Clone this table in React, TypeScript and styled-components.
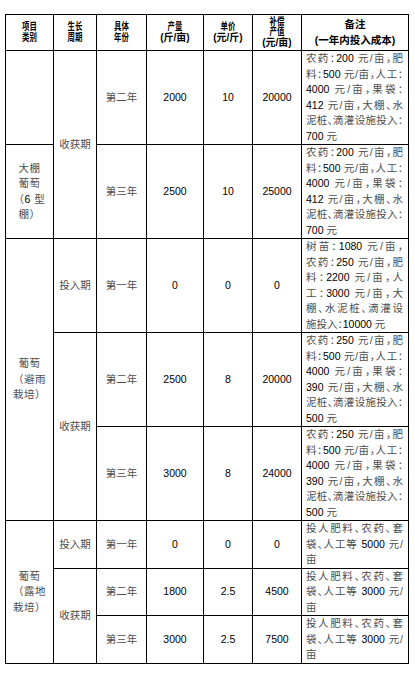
import React from "react";
import styled, { createGlobalStyle } from "styled-components";

const GlobalStyle = createGlobalStyle`
  html, body { margin: 0; padding: 0; background: #fff; }
  body { font-family: "Liberation Sans", "Noto Sans CJK SC", sans-serif; }
`;

const Page = styled.div`
  width: 415px;
  height: 674px;
  box-sizing: border-box;
  padding: 14px 0 0 5px;
  background: #fff;
`;

const Table = styled.table`
  border-collapse: collapse;
  table-layout: fixed;
  width: 404px;
  font-family: "Liberation Sans", "Noto Sans CJK SC", sans-serif;
`;

const HeadCell = styled.th<{ $tall?: boolean }>`
  border: 1px solid #000;
  padding: 0;
  height: 35px;
  font-size: ${(p) => (p.$tall ? "10.5px" : "10px")};
  font-weight: 700;
  line-height: ${(p) => (p.$tall ? "15.5px" : "10.5px")};
  color: #000;
  text-align: center;
  vertical-align: middle;
`;

const HeadLine = styled.span<{ $narrow?: boolean }>`
  display: block;
  white-space: nowrap;
  transform: ${(p) => (p.$narrow ? "scaleX(0.74)" : "none")};
`;

const Cell = styled.td`
  border: 1px solid #000;
  padding: 0;
  font-size: 10.5px;
  line-height: 15.5px;
  color: #4d4d4d;
  text-align: center;
  vertical-align: middle;
  white-space: nowrap;
`;

const KindLine = styled.span`
  display: block;
  letter-spacing: 0.5px;
`;

const NoteCell = styled.td`
  border: 1px solid #000;
  padding: 0 5px 0 4px;
  font-size: 10.5px;
  line-height: 15.5px;
  color: #4d4d4d;
  vertical-align: top;
  font-feature-settings: "halt";
`;

const NoteLine = styled.span<{ $last?: boolean }>`
  display: block;
  text-align: ${(p) => (p.$last ? "left" : "justify")};
  text-align-last: ${(p) => (p.$last ? "left" : "justify")};
`;

const Num = styled.span`
  color: #000;
`;

const withNums = (s: string) =>
  s.split(/(\d+(?:\.\d+)?)/).map((part, i) =>
    /^\d/.test(part) ? <Num key={i}>{part}</Num> : <React.Fragment key={i}>{part}</React.Fragment>
  );

type Span = { lines: string[]; span: number } | null;
type Row = {
  kind: Span;
  stage: Span;
  year: string;
  yld: string;
  price: string;
  value: string;
  notes: string[];
};

const notesA = (n: string) => [
  "农药：200 元/亩，肥",
  "料：500 元/亩，人工：",
  "4000 元/亩，果袋：",
  "412 元/亩，大棚、水",
  "泥桩、滴灌设施投入：",
  `${n} 元`,
];

const notesB = [
  "农药：250 元/亩，肥",
  "料：500 元/亩，人工：",
  "4000 元/亩，果袋：",
  "390 元/亩，大棚、水",
  "泥桩、滴灌设施投入：",
  "500 元",
];

const notesC = (n: string) => ["投人肥料、农药、套", `袋、人工等 ${n} 元/`, "亩"];

const rows: Row[] = [
  {
    kind: { lines: [], span: 1 },
    stage: { lines: ["收获期"], span: 2 },
    year: "第二年", yld: "2000", price: "10", value: "20000",
    notes: notesA("700"),
  },
  {
    kind: { lines: ["大棚", "葡萄", "（6 型", "棚）"], span: 1 },
    stage: null,
    year: "第三年", yld: "2500", price: "10", value: "25000",
    notes: notesA("700"),
  },
  {
    kind: { lines: ["葡萄", "（避雨", "栽培）"], span: 3 },
    stage: { lines: ["投入期"], span: 1 },
    year: "第一年", yld: "0", price: "0", value: "0",
    notes: [
      "树苗：1080 元/亩，",
      "农药：250 元/亩，肥",
      "料：2200 元/亩，人",
      "工：3000 元/亩，大",
      "棚、水泥桩、滴灌设",
      "施投入：10000 元",
    ],
  },
  {
    kind: null,
    stage: { lines: ["收获期"], span: 2 },
    year: "第二年", yld: "2500", price: "8", value: "20000",
    notes: notesB,
  },
  {
    kind: null,
    stage: null,
    year: "第三年", yld: "3000", price: "8", value: "24000",
    notes: notesB,
  },
  {
    kind: { lines: ["葡萄", "（露地", "栽培）"], span: 3 },
    stage: { lines: ["投入期"], span: 1 },
    year: "第一年", yld: "0", price: "0", value: "0",
    notes: notesC("5000"),
  },
  {
    kind: null,
    stage: { lines: ["收获期"], span: 2 },
    year: "第二年", yld: "1800", price: "2.5", value: "4500",
    notes: notesC("3000"),
  },
  {
    kind: null,
    stage: null,
    year: "第三年", yld: "3000", price: "2.5", value: "7500",
    notes: notesC("3000"),
  },
];

const headers: { lines: { t: string; narrow?: boolean }[]; tall?: boolean }[] = [
  { lines: [{ t: "项目", narrow: true }, { t: "类别", narrow: true }] },
  { lines: [{ t: "生长", narrow: true }, { t: "周期", narrow: true }] },
  { lines: [{ t: "具体", narrow: true }, { t: "年份", narrow: true }] },
  { lines: [{ t: "产量", narrow: true }, { t: "(斤/亩)" }] },
  { lines: [{ t: "单价", narrow: true }, { t: "(元/斤)" }] },
  { lines: [{ t: "补偿", narrow: true }, { t: "产值", narrow: true }, { t: "(元/亩)" }] },
  { lines: [{ t: "备注" }, { t: "(一年内投入成本)" }], tall: true },
];

const colWidths = [48, 43, 50, 57, 49, 49, 107];

export default function App() {
  return (
    <>
      <GlobalStyle />
      <Page>
        <Table>
          <colgroup>
            {colWidths.map((w, i) => (
              <col key={i} style={{ width: w }} />
            ))}
          </colgroup>
          <thead>
            <tr>
              {headers.map((h, i) => (
                <HeadCell key={i} $tall={h.tall}>
                  {h.lines.map((l, j) => (
                    <HeadLine key={j} $narrow={l.narrow}>
                      {l.t}
                    </HeadLine>
                  ))}
                </HeadCell>
              ))}
            </tr>
          </thead>
          <tbody>
            {rows.map((r, i) => (
              <tr key={i}>
                {r.kind && (
                  <Cell rowSpan={r.kind.span}>
                    {r.kind.lines.map((l, j) => (
                      <KindLine key={j}>{withNums(l)}</KindLine>
                    ))}
                  </Cell>
                )}
                {r.stage && <Cell rowSpan={r.stage.span}>{r.stage.lines[0]}</Cell>}
                <Cell>{r.year}</Cell>
                <Cell>
                  <Num>{r.yld}</Num>
                </Cell>
                <Cell>
                  <Num>{r.price}</Num>
                </Cell>
                <Cell>
                  <Num>{r.value}</Num>
                </Cell>
                <NoteCell>
                  {r.notes.map((n, j) => (
                    <NoteLine key={j} $last={j === r.notes.length - 1}>
                      {withNums(n)}
                    </NoteLine>
                  ))}
                </NoteCell>
              </tr>
            ))}
          </tbody>
        </Table>
      </Page>
    </>
  );
}
